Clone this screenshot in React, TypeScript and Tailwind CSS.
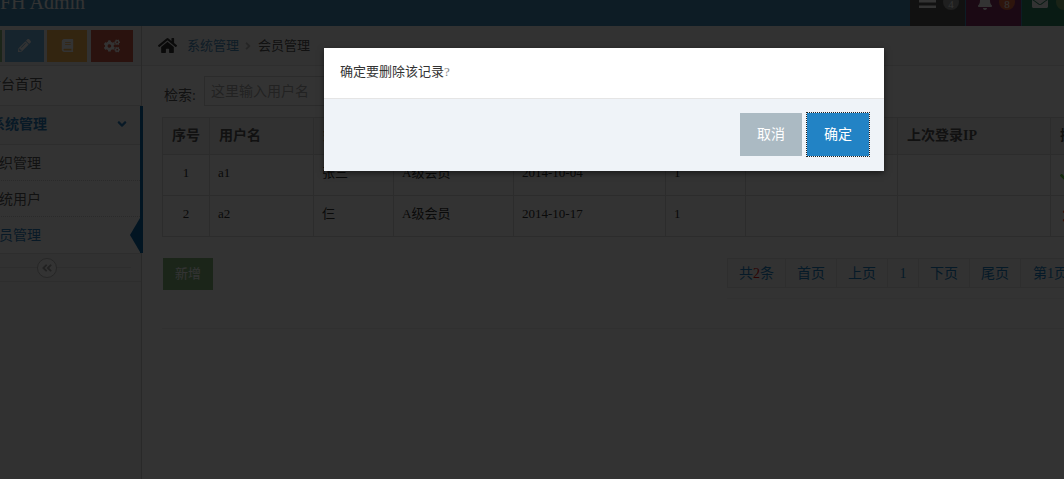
import { FaHome, FaPencilAlt, FaBook, FaCogs, FaAngleDown, FaAngleDoubleLeft, FaBell, FaEnvelope, FaTimes, FaCheck, FaAngleRight } from "react-icons/fa";

const font = "font-['Liberation_Serif','Noto_Sans_CJK_SC',serif]";
const widths = [47, 104, 80, 120, 152, 80, 152, 153, 100];
const headers = ["序号", "用户名", "姓名", "等级", "到期日期", "年限", "上次登录", "上次登录IP", "操作"];
const rows = [
  ["1", "a1", "张三", "A级会员", "2014-10-04", "1", "", ""],
  ["2", "a2", "仨", "A级会员", "2014-10-17", "1", "", ""],
];
const pages = [
  ["首页", 51],
  ["上页", 51],
  ["1", 31],
  ["下页", 51],
  ["尾页", 51],
  ["第1页", 60],
] as const;

function Sidebar() {
  return (
    <aside className="w-[190px] shrink-0 border-r border-[#ccc] text-[14px] text-[#585858] bg-[#f2f2f2] min-h-[460px]">
      <div className="h-[40px] border-b border-[#e0e0e0] flex items-center justify-center gap-[3px] pl-[1px]">
        <div className="w-[41px] h-[32px] bg-[#87b87f] flex items-center justify-center text-white"><FaCheck /></div>
        <div className="w-[39px] h-[32px] bg-[#6fb3e0] flex items-center justify-center text-white"><FaPencilAlt size={13} /></div>
        <div className="w-[40px] h-[32px] bg-[#ffb752] flex items-center justify-center text-white"><FaBook size={13} /></div>
        <div className="w-[42px] h-[32px] bg-[#d15b47] flex items-center justify-center text-white ml-[1px]"><FaCogs size={16} /></div>
      </div>
      <div className="h-[40px] flex items-center pl-[35px] pb-[2px] border-b border-[#e0e0e0] bg-white">后台首页</div>
      <div className="relative z-10 border-r-[3px] border-[#0a68a8] -mr-[2px]">
        <div className="h-[39px] flex items-center pl-[39px] pr-[11px] pb-[2px] justify-between font-bold text-[#2b7dbc] bg-[#fafafa] border-b border-[#e0e0e0]">
          <span>系统管理</span>
          <FaAngleDown size={14} />
        </div>
        <div className="h-[36px] flex items-center pl-[33px] pt-[2px] border-b border-dotted border-[#d0d0d0] bg-white">组织管理</div>
        <div className="h-[36px] flex items-center pl-[33px] pt-[2px] border-b border-dotted border-[#d0d0d0] bg-white">系统用户</div>
        <div className="h-[36px] flex items-center pl-[33px] text-[#2b7dbc] bg-white">会员管理</div>
        <div className="absolute right-0 top-[112px] w-0 h-0 border-y-[17px] border-y-transparent border-r-[10px] border-r-[#0a68a8]" />
      </div>
      <div className="h-[29px] border-y border-[#e0e0e0] flex items-center justify-center relative">
        <div className="absolute left-[10px] right-[10px] top-[13px] h-px bg-[#e0e0e0]" />
        <div className="relative w-[20px] h-[20px] rounded-full border border-[#bbb] bg-white flex items-center justify-center text-[#aaa]">
          <FaAngleDoubleLeft size={12} />
        </div>
      </div>
    </aside>
  );
}

function MemberTable() {
  return (
    <table className="border-collapse table-fixed w-[988px] text-[13px] text-[#333]">
      <colgroup>
        {widths.map((w, i) => (
          <col key={i} style={{ width: w }} />
        ))}
      </colgroup>
      <thead>
        <tr className="h-[37px] bg-[#f2f2f2]">
          {headers.map((h, i) => (
            <th key={h} className={`border border-[#ddd] pb-[2px] text-[14px] font-bold text-[#555] ${i === 0 ? "text-center" : "text-left pl-[9px]"}`}>{h}</th>
          ))}
        </tr>
      </thead>
      <tbody>
        {rows.map((r, idx) => (
          <tr key={r[0]} className="h-[41px]">
            {r.map((c, i) => (
              <td key={i} className={`border border-[#ddd] pb-[4px] ${i === 0 ? "text-center" : "text-left pl-[8px]"}`}>{c}</td>
            ))}
            <td className="border border-[#ddd] pl-[9px]">
              {idx === 0 ? <FaCheck size={13} className="text-[#66cc44]" /> : <FaTimes size={18} className="text-[#ff5533]" />}
            </td>
          </tr>
        ))}
      </tbody>
    </table>
  );
}

function Main() {
  return (
    <main className="flex-1 min-w-0 text-[#333]">
      <div className="h-[40px] border-b border-[#e5e5e5] bg-[#f9f9f9] flex items-center pl-[16px] text-[13px]">
        <FaHome size={19} className="text-[#333]" />
        <span className="ml-[10px] text-[#4c8fbd]">系统管理</span>
        <FaAngleRight size={12} className="ml-[3px] mr-[4px] text-[#bbb]" />
        <span className="text-[#555]">会员管理</span>
      </div>
      <div className="pl-[20px]">
        <div className="h-[51px] flex items-end pb-[12px] gap-[5px] pl-[2px]">
          <span className="text-[14px] text-[#555] -mb-[1px] w-[35px]">检索:</span>
          <div className="w-[160px] h-[30px] -mb-[1px] border border-[#d5d5d5] pl-[6px] flex items-center text-[14px] text-[#aaa]">这里输入用户名</div>
        </div>
        <MemberTable />
        <div className="mt-[21px] flex items-start">
          <div className="w-[50px] h-[32px] ml-[1px] bg-[#87b87f] flex items-center justify-center text-[13px] text-white">新增</div>
          <div className="ml-[514px] pb-[10px] border-b border-[#f4f4f4]">
            <div className="flex h-[30px] border border-[#e5e5e5] text-[14px] text-[#2283c5] bg-[#fafafa]">
              <div className="w-[58px] border-r border-[#e5e5e5] flex items-center justify-center">共<span className="text-[#dd1111]">2</span>条</div>
              {pages.map(([t, w]) => (
                <div key={t} style={{ width: w }} className="shrink-0 border-r border-[#e5e5e5] flex items-center justify-center">{t}</div>
              ))}
            </div>
          </div>
        </div>
        <div className="mt-[29px] h-px bg-[#eeeeee] w-[1000px]" />
      </div>
    </main>
  );
}

export default function App() {
  return (
    <div className={`relative w-[1064px] h-[479px] overflow-hidden bg-white ${font}`}>
      <div className="w-[1300px] -ml-[48px]">
        <header className="h-[26px] bg-[#438eb9] flex items-end overflow-hidden">
          <span className="ml-[48px] mb-[8px] text-[20px] leading-[32px] text-white">FH Admin</span>
          <div className="ml-auto mr-[175px] flex h-[26px] text-white">
            <div className="w-[55px] bg-[#555] flex items-start gap-[7px] pl-[9px] overflow-hidden">
              <svg width="17" height="8" viewBox="0 0 17 8" fill="currentColor" className="shrink-0">
                <rect x="0" y="0" width="17" height="2.5" />
                <rect x="0" y="5.5" width="17" height="2.5" />
              </svg>
              <span className="w-[16px] h-[16px] rounded-full bg-[#999] -mt-[6px] flex items-end justify-center text-[11px] leading-[12px] shrink-0">4</span>
            </div>
            <div className="w-[55px] ml-px bg-[#892e65] flex items-start gap-[6px] pl-[11px] overflow-hidden">
              <FaBell size={16} className="-mt-[6px] shrink-0" />
              <span className="w-[16px] h-[16px] rounded-full bg-[#e4693f] -mt-[6px] flex items-end justify-center text-[11px] leading-[12px] shrink-0">8</span>
            </div>
            <div className="w-[55px] ml-px bg-[#2e8965] flex items-start gap-[8px] pl-[10px] overflow-hidden">
              <FaEnvelope size={16} className="-mt-[6px] shrink-0" />
              <span className="w-[16px] h-[16px] rounded-full bg-[#82af6f] -mt-[6px] shrink-0" />
            </div>
          </div>
        </header>
        <div className="flex min-h-[453px] bg-white">
          <Sidebar />
          <Main />
        </div>
      </div>

      <div className="absolute inset-0 z-20 bg-black/80" />

      <div className="absolute z-30 left-[324px] top-[48px] w-[560px] bg-white shadow-[0_2px_6px_rgba(0,0,0,0.5)]">
        <div className="h-[51px] border-b border-[#e5e5e5] flex items-center pl-[16px] pb-[2px] text-[13px] text-[#333]">确定要删除该记录<span className="text-[#888]">?</span></div>
        <div className="h-[72px] bg-[#eff3f8] flex items-start justify-end pt-[14px] pr-[15px] gap-[5px] text-[14px] text-white">
          <div className="w-[62px] h-[43px] bg-[#abbac3] flex items-center justify-center">取消</div>
          <div className="w-[62px] h-[43px] bg-[#2283c5] flex items-center justify-center outline-1 outline-dotted outline-[#222]">确定</div>
        </div>
      </div>
    </div>
  );
}
